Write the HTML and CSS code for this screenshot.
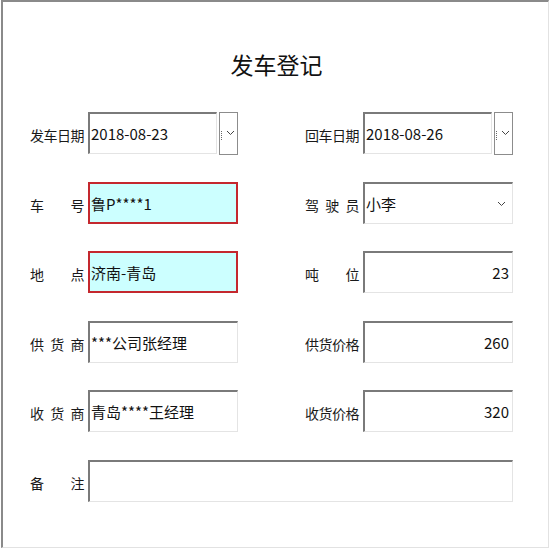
FILE: index.html
```html
<!DOCTYPE html>
<html>
<head>
    <title>发车登记</title>
    <link rel="stylesheet" href="styles.css">
</head>
<body>
    <div class="window">
        <h1 class="title">发车登记</h1>
        <div class="form">
            <div class="field">
                <span class="label">发车日期</span>
                <div class="date">
                    <div class="box">2018-08-23</div>
                    <div class="drop"><i class="cut"></i><svg width="9" height="6" viewBox="0 0 9 6"><path d="M1 1 L4.5 4.5 L8 1" fill="none" stroke="#444" stroke-width="1"/></svg></div>
                </div>
            </div>
            <div class="field">
                <span class="label">回车日期</span>
                <div class="date">
                    <div class="box">2018-08-26</div>
                    <div class="drop"><i class="cut"></i><svg width="9" height="6" viewBox="0 0 9 6"><path d="M1 1 L4.5 4.5 L8 1" fill="none" stroke="#444" stroke-width="1"/></svg></div>
                </div>
            </div>

            <div class="field">
                <span class="label">车号</span>
                <div class="box required">鲁P****1</div>
            </div>
            <div class="field">
                <span class="label">驾驶员</span>
                <div class="box combo">
                    <span>小李</span>
                    <svg width="9" height="6" viewBox="0 0 9 6"><path d="M1 1 L4.5 4.5 L8 1" fill="none" stroke="#444" stroke-width="1"/></svg>
                </div>
            </div>

            <div class="field">
                <span class="label">地点</span>
                <div class="box required">济南-青岛</div>
            </div>
            <div class="field">
                <span class="label">吨位</span>
                <div class="box num">23</div>
            </div>

            <div class="field">
                <span class="label">供货商</span>
                <div class="box">***公司张经理</div>
            </div>
            <div class="field">
                <span class="label">供货价格</span>
                <div class="box num">260</div>
            </div>

            <div class="field">
                <span class="label">收货商</span>
                <div class="box">青岛****王经理</div>
            </div>
            <div class="field">
                <span class="label">收货价格</span>
                <div class="box num">320</div>
            </div>

            <div class="field wide">
                <span class="label">备注</span>
                <div class="box"></div>
            </div>
        </div>
    </div>
</body>
</html>
```

FILE: styles.css
```css
/* Window frame */
body {
    margin: 0;
    background-color: #fff;
    font-family: "Noto Sans CJK SC", "Microsoft YaHei", sans-serif;
    color: #222;
}

.window {
    margin-left: 1px;
    width: 548px;
    height: 548px;
    box-sizing: border-box;
    border-top: 2px solid #8a8a8a;
    border-left: 2px solid #8a8a8a;
    border-right: 1px solid #e2e2e2;
    border-bottom: 1px solid #e2e2e2;
    padding-left: 27px;
}

.title {
    margin: 0;
    padding-top: 48px;
    padding-right: 25px;
    height: 28px;
    line-height: 28px;
    font-size: 23px;
    font-weight: normal;
    text-align: center;
    color: #111;
}

/* Form grid: two columns of label + box */
.form {
    margin-top: 34px;
    display: grid;
    grid-template-columns: 208px 208px;
    column-gap: 67px;
    row-gap: 27.6px;
}

.field {
    display: flex;
    align-items: center;
    gap: 4px;
    height: 42px;
}

.field.wide {
    grid-column: 1 / 3;
}

.label {
    width: 54px;
    flex: none;
    font-size: 14px;
    letter-spacing: -0.5px;
    white-space: nowrap;
    text-align: justify;
    text-align-last: justify;
    padding-top: 4px;
    color: #1a1a1a;
}

.box {
    flex: 1;
    height: 42px;
    box-sizing: border-box;
    border-top: 2px solid #7a7a7a;
    border-left: 2px solid #7a7a7a;
    border-right: 1px solid #e4e4e4;
    border-bottom: 1px solid #e4e4e4;
    background-color: #fff;
    font-size: 15px;
    line-height: 36px;
    padding: 2px 3px 0 1px;
    white-space: nowrap;
    overflow: hidden;
    color: #111;
}

.box.required {
    border: 2px solid #c4282e;
    background-color: #ccffff;
}

.box.num {
    text-align: right;
}

.box.combo {
    display: flex;
    align-items: center;
    justify-content: space-between;
    padding-right: 6px;
}

/* Date picker: text box plus drop button */
.date {
    flex: 1;
    display: flex;
    align-items: center;
    gap: 2px;
}

.date .box {
    flex: none;
    width: 129px;
}

.drop {
    width: 19px;
    height: 43px;
    box-sizing: border-box;
    border: 1px solid #8c8c8c;
    background-color: #fff;
    display: flex;
    align-items: center;
}

.cut {
    width: 1px;
    height: 9px;
    margin: 4px 3px 0 1px;
    border-left: 1px dotted #666;
}
```
